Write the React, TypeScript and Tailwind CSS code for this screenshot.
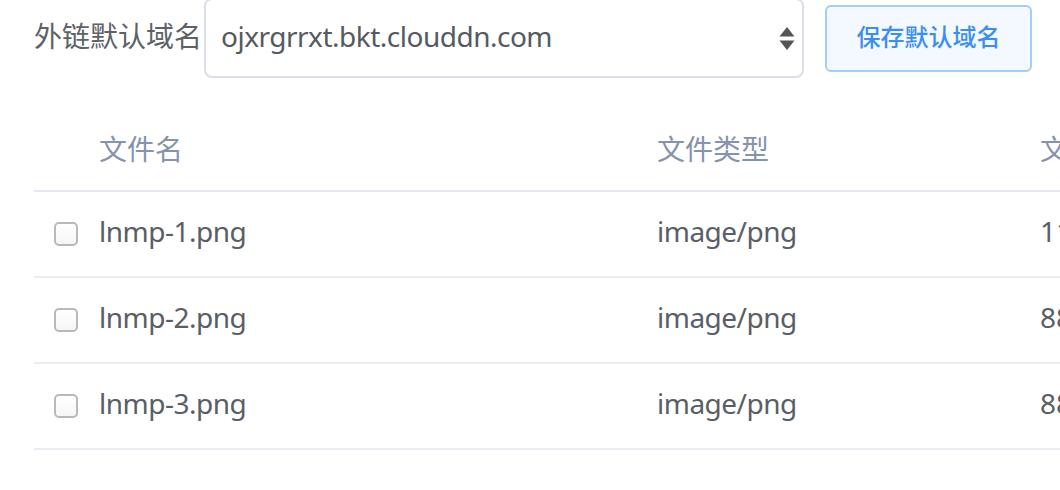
import React from 'react';

const files = [
  { name: 'lnmp-1.png', type: 'image/png', size: '11' },
  { name: 'lnmp-2.png', type: 'image/png', size: '88' },
  { name: 'lnmp-3.png', type: 'image/png', size: '88' },
];

export default function App() {
  return (
    <div
      className="w-[1060px] h-[490px] overflow-hidden bg-white"
      style={{ fontFamily: '"Noto Sans", "Noto Sans CJK SC", sans-serif' }}
    >
      <div className="flex items-center h-[80px] mt-[-2px] pl-[34px]">
        <span className="text-[28px] text-[#5e6167] leading-none pb-[4px]">外链默认域名</span>
        <div className="relative ml-[2px] w-[600px] h-[80px] border-2 border-[#dcdfe6] rounded-[8px] flex items-center pl-[15px] shrink-0">
          <span className="text-[28px] text-[#555a60] leading-none tracking-[-0.5px] pb-[4px]">ojxrgrrxt.bkt.clouddn.com</span>
          <svg className="absolute right-[7px] top-[27px]" width="16" height="24" viewBox="0 0 16 24">
            <polygon points="8,0 15.5,9.5 0.5,9.5" fill="#555" />
            <polygon points="0.5,13.5 15.5,13.5 8,23" fill="#555" />
          </svg>
        </div>
        <button className="ml-[21px] w-[207px] h-[67px] shrink-0 rounded-[6px] border-2 border-[#a3cdfb] bg-[#f4f8ff] text-[#3b8ff0] text-[24px] font-medium leading-none pb-[2px]">
          保存默认域名
        </button>
      </div>

      <div className="ml-[34px] mt-[32px]">
        <div className="flex h-[82px] items-center border-b-2 border-[#e4e8f2] text-[28px] text-[#8593ac] leading-none">
          <div className="w-[65px] shrink-0" />
          <div className="w-[558px] shrink-0 pb-[2px]">文件名</div>
          <div className="w-[383px] shrink-0 pb-[2px]">文件类型</div>
          <div className="whitespace-nowrap shrink-0 pb-[2px]">文件大小</div>
        </div>
        {files.map((f) => (
          <div
            key={f.name}
            className="flex h-[86px] items-center border-b-2 border-[#eaedf4] text-[28px] text-[#5a5e66] leading-none"
          >
            <div className="w-[65px] shrink-0 pl-[20px]">
              <div className="w-[24px] h-[24px] rounded-[5px] border-2 border-[#b9b9b9] bg-gradient-to-b from-white to-[#f6f6f6]" />
            </div>
            <div className="w-[558px] shrink-0 tracking-[-0.5px] pb-[7px]">{f.name}</div>
            <div className="w-[383px] shrink-0 tracking-[-0.5px] pb-[7px]">{f.type}</div>
            <div className="whitespace-nowrap shrink-0 pb-[7px]">{f.size} KB</div>
          </div>
        ))}
      </div>
    </div>
  );
}
